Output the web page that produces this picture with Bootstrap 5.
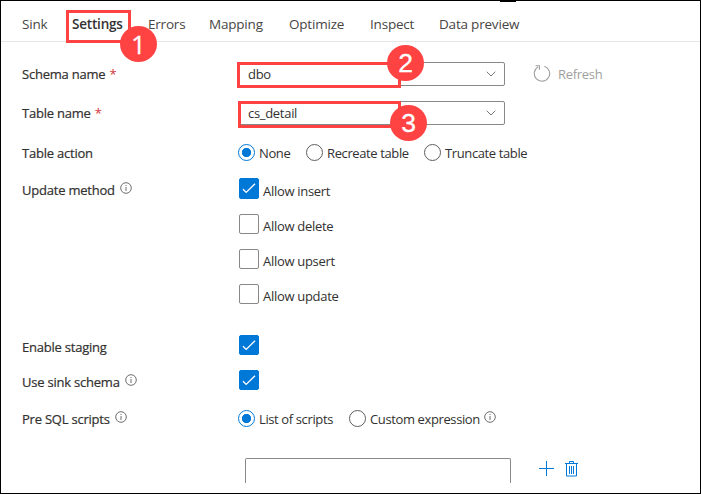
<!DOCTYPE html>
<html lang="en">
<head>
<meta charset="utf-8">
<meta name="viewport" content="width=device-width, initial-scale=1">
<title>Sink settings</title>
<link href="https://cdn.jsdelivr.net/npm/bootstrap@5.3.0/dist/css/bootstrap.min.css" rel="stylesheet">
<style>
body{font-family:"Open Sans","Noto Sans",sans-serif;font-size:13px;line-height:18px;letter-spacing:-.3px;color:#323130;background:#fff;overflow:hidden}
.panel{width:701px;height:494px;border:1px solid #000}
.top-mark{left:499px;top:0;width:16px;height:1px;background:#000}
.tabs{height:41px;border-bottom:1px solid #e6e6e6;padding:0 21px;font-size:13.5px;letter-spacing:-.2px;color:#484644}
.tabs a{color:inherit;text-decoration:none;white-space:nowrap;line-height:20px;padding-top:5px;flex:none}
.tabs .current{font-weight:600;color:#323130}
.w50{width:50px}.w61{width:61px}.w69{width:69px}.w76{width:76px}.w80{width:80px}.w81{width:81px}
.line{display:flex;padding-left:21px}
.caption{width:216px;flex:none;white-space:nowrap;letter-spacing:-.22px;-webkit-text-stroke:.2px #323130}
.caption.tall{padding-top:3px}
.caption svg{vertical-align:1px;margin-left:2px}
.req{color:#d13438;-webkit-text-stroke:0;margin-left:1px}
.drop{width:267px;height:24px;border:1px solid #8a8886;border-radius:2px;padding:0 8px 0 9px}
.refresh-icon{margin-left:28px}
.refresh-text{margin-left:7px;color:#a19f9d}
.tick{width:20px;height:20px;border:1px solid #8a8886;border-radius:2px;flex:none;margin-left:1px}
.tick.on{background:#0078d7;border-color:#0078d7}
.tick.long{height:21px}
.tick svg{display:block;margin:-1px}
.choices{gap:15px}
.choice{height:20px}
.choice.first{height:21px}
.choice-text{margin-left:4px;padding-top:3px}
.choice.first .choice-text{padding-top:4px}
.dot{width:17px;height:17px;border:1px solid #605e5c;border-radius:50%;flex:none;margin-right:4px}
.dot.on{border-color:#0078d7;background:radial-gradient(circle,#0078d7 4.3px,#fff 5px)}
.radios{letter-spacing:-.38px}
.script-box{width:266px;height:25px;border:1px solid #8a8886;border-bottom:0;border-radius:2px 2px 0 0;margin-left:244px}
.add{margin:2px 0 0 28px}
.bin{margin:2px 0 0 10px}
.frame{position:absolute;border:3px solid #ff4343}
.num{position:absolute;width:37px;height:36px;border-radius:50%;background:#ff4343;color:#fff;font:26.5px/36px "Liberation Sans",Arial,sans-serif;text-align:center;letter-spacing:0;-webkit-text-stroke:.3px #fff}
.num.one{font-family:"Open Sans",sans-serif;font-size:26px}
svg{flex:none}
</style>
<script src="https://cdn.jsdelivr.net/npm/bootstrap@5.3.0/dist/js/bootstrap.bundle.min.js"></script>
</head>
<body>
<svg width="0" height="0" class="position-absolute">
  <symbol id="info" viewBox="0 0 12 12"><circle cx="6" cy="6" r="5.3" fill="none" stroke="#605e5c" stroke-width=".9"/><path d="M6 5v4M6 3v1" stroke="#605e5c" stroke-width=".9"/></symbol>
  <symbol id="check" viewBox="0 0 20 20"><path d="M4 11.2l3.2 3.2L16 5.8" fill="none" stroke="#fff" stroke-width="1.3"/></symbol>
  <symbol id="chev" viewBox="0 0 10 6"><path d="M.7.7L5 5 9.3.7" fill="none" stroke="#797775" stroke-width="1"/></symbol>
</svg>
<main class="panel position-relative">
  <div class="top-mark position-absolute"></div>
  <nav class="tabs d-flex align-items-center">
    <a href="#" class="w50">Sink</a><a href="#" class="current w76">Settings</a><a href="#" class="w61">Errors</a><a href="#" class="w80">Mapping</a><a href="#" class="w81">Optimize</a><a href="#" class="w69">Inspect</a><a href="#">Data preview</a>
  </nav>

  <div class="line align-items-center" style="margin-top:20px">
    <div class="caption">Schema name <span class="req">*</span></div>
    <div class="drop d-flex align-items-center justify-content-between"><span>dbo</span><svg width="10" height="6"><use href="#chev"/></svg></div>
    <svg class="refresh-icon" width="18" height="18" viewBox="0 0 18 18" fill="none" stroke="#a19f9d" stroke-width="1.1"><path d="M11.4 1.2A7.7 7.7 0 1 1 5 1.900M2.600.8h3.800v4"/></svg>
    <span class="refresh-text">Refresh</span>
  </div>
  <div class="line align-items-center" style="margin-top:15px">
    <div class="caption">Table name <span class="req">*</span></div>
    <div class="drop d-flex align-items-center justify-content-between"><span>cs_detail</span><svg width="10" height="6"><use href="#chev"/></svg></div>
  </div>
  <div class="line align-items-center" style="margin-top:19px;height:17px">
    <div class="caption">Table action</div>
    <div class="radios d-flex align-items-center"><span class="dot on"></span><span style="width:47px">None</span><span class="dot"></span><span style="width:97px">Recreate table</span><span class="dot"></span><span>Truncate table</span></div>
  </div>
  <div class="line" style="margin-top:17px;height:157px">
    <div class="caption tall">Update method <svg width="12" height="12"><use href="#info"/></svg></div>
    <div class="choices d-flex flex-column">
      <div class="choice first d-flex"><span class="tick on long"><svg width="20" height="20"><use href="#check"/></svg></span><span class="choice-text">Allow insert</span></div>
      <div class="choice d-flex"><span class="tick"></span><span class="choice-text">Allow delete</span></div>
      <div class="choice d-flex"><span class="tick"></span><span class="choice-text">Allow upsert</span></div>
      <div class="choice d-flex"><span class="tick"></span><span class="choice-text">Allow update</span></div>
    </div>
  </div>
  <div class="line" style="height:20px">
    <div class="caption tall">Enable staging</div>
    <span class="tick on"><svg width="20" height="20"><use href="#check"/></svg></span>
  </div>
  <div class="line" style="margin-top:15px;height:20px">
    <div class="caption tall">Use sink schema <svg width="12" height="12"><use href="#info"/></svg></div>
    <span class="tick on"><svg width="20" height="20"><use href="#check"/></svg></span>
  </div>
  <div class="line align-items-center" style="margin-top:20px;height:17px">
    <div class="caption">Pre SQL scripts <svg width="12" height="12"><use href="#info"/></svg></div>
    <div class="radios d-flex align-items-center"><span class="dot on"></span><span style="width:90px">List of scripts</span><span class="dot"></span><span>Custom expression</span><svg width="12" height="12" class="ms-1 mb-1"><use href="#info"/></svg></div>
  </div>
  <div class="d-flex" style="margin-top:31px">
    <div class="script-box"></div>
    <svg class="add" width="16" height="16" viewBox="0 0 16 16" stroke="#0078d7"><path d="M0 8.500h15M7.500 1v15"/></svg>
    <svg class="bin" width="14" height="18" viewBox="0 0 14 18" fill="none" stroke="#0078d7"><path d="M0 3.500h13M1.500 3.500v12.500h10V3.500M4.500 3V1.500h4V3M4.500 6v8M6.500 6v8M8.500 6v8"/></svg>
  </div>

  <div class="frame" style="left:65px;top:9px;width:65px;height:33px"></div>
  <div class="frame" style="left:236px;top:61px;width:164px;height:26px"></div>
  <div class="frame" style="left:237px;top:100px;width:163px;height:27px"></div>
  <div class="num one" style="left:119px;top:25px">1</div>
  <div class="num" style="left:386px;top:44px">2</div>
  <div class="num" style="left:389px;top:104px">3</div>
</main>
</body>
</html>
